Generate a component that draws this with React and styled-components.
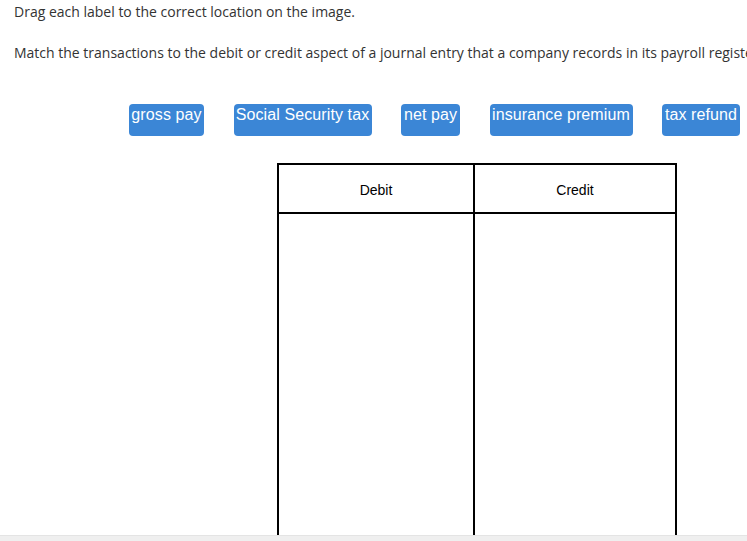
import React from 'react';
import styled, { createGlobalStyle } from 'styled-components';

const GlobalStyle = createGlobalStyle`
    html, body {
        margin: 0;
        padding: 0;
        background: #fff;
    }
`;

const Page = styled.div`
    height: 541px;
    display: flex;
    flex-direction: column;
    overflow: hidden;
`;

const Content = styled.div`
    flex: 1;
    overflow: hidden;
    padding: 2px 0 0 14px;
`;

const Prompt = styled.p`
    margin: 0 0 ${props => props.gap || 0}px 0;
    font-family: "Open Sans", sans-serif;
    font-size: 14px;
    line-height: 20px;
    color: #333;
    white-space: nowrap;
`;

const LabelBank = styled.div`
    display: flex;
    gap: 29.5px;
    margin: 41px 0 0 115px;
    white-space: nowrap;
`;

const Label = styled.div`
    flex: none;
    width: ${props => props.w}px;
    height: 32px;
    box-sizing: border-box;
    padding: 1px 0 0 0;
    text-align: center;
    background: #3b86d6;
    border-radius: 4px;
    color: #fff;
    font-family: "Liberation Sans", Arial, sans-serif;
    font-size: 16px;
    line-height: 19px;
    letter-spacing: 0.1px;
`;

const Board = styled.div`
    display: grid;
    grid-template-columns: 194px 200px;
    grid-template-rows: 47px 1fr;
    width: 400px;
    height: 400px;
    margin: 27px 0 0 263px;
    box-sizing: border-box;
    border: 2px solid #000;
    background: #000;
    gap: 2px;
`;

const HeaderCell = styled.div`
    background: #fff;
    display: flex;
    align-items: center;
    justify-content: center;
    padding-top: 2px;
    font-family: "Liberation Sans", Arial, sans-serif;
    font-size: 14px;
    color: #000;
`;

const DropCell = styled.div`
    background: #fff;
`;

const Scrollbar = styled.div`
    flex: none;
    height: 5px;
    background: #efefef;
    border-top: 1px solid #e4e4e4;
`;

const labels = [
    { text: 'gross pay', w: 75 },
    { text: 'Social Security tax', w: 138 },
    { text: 'net pay', w: 59 },
    { text: 'insurance premium', w: 143 },
    { text: 'tax refund', w: 78 },
];

export default function App() {
    return (
        <Page>
            <GlobalStyle />
            <Content>
                <Prompt gap={21}>Drag each label to the correct location on the image.</Prompt>
                <Prompt>Match the transactions to the debit or credit aspect of a journal entry that a company records in its payroll register.</Prompt>
                <LabelBank>
                    {labels.map(l => <Label key={l.text} w={l.w}>{l.text}</Label>)}
                </LabelBank>
                <Board>
                    <HeaderCell>Debit</HeaderCell>
                    <HeaderCell>Credit</HeaderCell>
                    <DropCell />
                    <DropCell />
                </Board>
            </Content>
            <Scrollbar />
        </Page>
    );
}
